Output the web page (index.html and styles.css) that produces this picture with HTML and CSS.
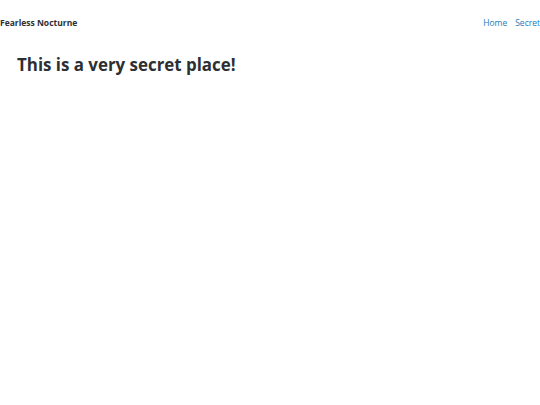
FILE: index.html
```html
<!DOCTYPE html>
<html>
<head>
<meta charset="utf-8">
<link rel="stylesheet" href="styles.css">
</head>
<body>
<header class="nav">
  <span class="brand">Fearless Nocturne</span>
  <nav class="links">
    <a href="#">Home</a>
    <a href="#">Secret</a>
  </nav>
</header>
<main class="content">
  <h1 class="title">This is a very secret place!</h1>
</main>
</body>
</html>
```
FILE: styles.css
```css
html, body {
  margin: 0;
  padding: 0;
  background: #ffffff;
  font-family: "Open Sans", sans-serif;
  color: #2d2f33;
}
.nav {
  display: flex;
  justify-content: space-between;
  align-items: center;
  height: 44px;
}
.brand {
  font-size: 8.5px;
  font-weight: 700;
}
.links {
  display: flex;
  gap: 8px;
}
.links a {
  font-size: 8.5px;
  color: #2878b5;
  text-decoration: none;
}
.content {
  padding: 0 17px;
}
.title {
  margin: 8px 0 0;
  font-size: 16.9px;
  font-weight: 700;
  line-height: 26px;
}
```
